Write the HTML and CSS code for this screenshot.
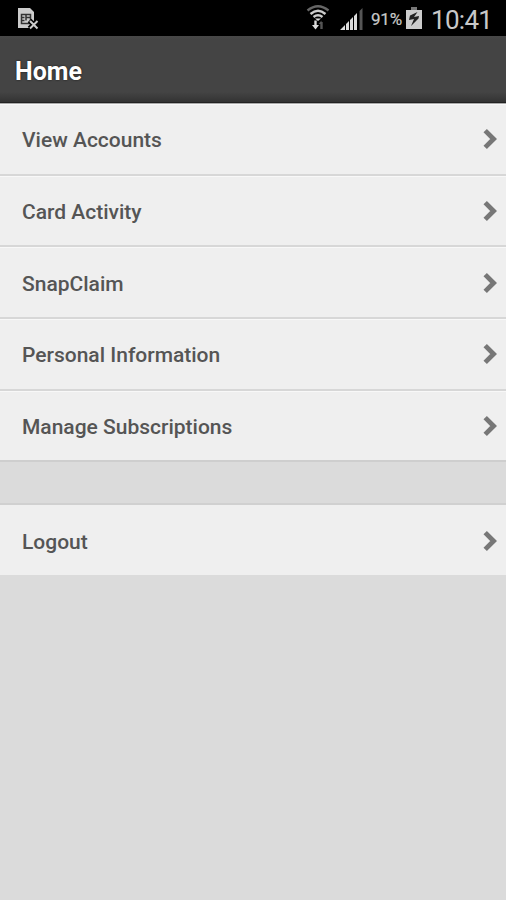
FILE: index.html
```
<!DOCTYPE html>
<html lang="en">
<head>
<meta charset="utf-8">
<title>Home</title>
<link rel="stylesheet" href="styles.css">
</head>
<body>
<svg class="defs" width="0" height="0"><symbol id="chevron" viewBox="0 0 16 22"><path d="M3.200 2.600 11.600 11 3.200 19.400" fill="none" stroke="currentColor" stroke-width="4.800"/></symbol></svg>
<div class="status">
  <svg class="sim" width="22" height="23" viewBox="0 0 22 23">
    <path d="M1 1h12l4 4v16H1z" fill="#ccc"/>
    <path d="M4.500 7.500h9v9h-9zM4.500 10.500h3M4.500 13.500h3M9 7.500v6M9 10.500h4.500" fill="none" stroke="#333" stroke-width="1.500"/>
    <path d="m12.500 13.500 8 8m0-8-8 8" stroke="#000" stroke-width="5"/>
    <path d="m13 14 7.500 7.500m0-7.500L13 21.500" stroke="#ccc" stroke-width="2"/>
  </svg>
  <svg class="wifi" width="24" height="27" viewBox="0 0 24 27" fill="none">
    <path d="M1.500 6.500Q12-2 22.500 6.500" stroke="#666" stroke-width="2.400"/>
    <path d="M4.500 10Q12 3.500 19.500 10M7.500 13Q12 9.500 16.500 13" stroke="#ccc" stroke-width="2.400"/>
    <path d="M9 14.500h6L12 17z" fill="#ddd"/>
    <path d="M9.500 16.500V23" stroke="#ddd" stroke-width="2.400"/><path d="M6 21h7l-3.500 4.500z" fill="#ddd"/>
    <path d="M15.500 25v-7" stroke="#555" stroke-width="2.400"/><path d="m12.500 20 3-3.500v3.500z" fill="#555"/>
  </svg>
  <svg class="signal" width="24" height="24" viewBox="0 0 24 24">
    <path d="M0 23l5-5v5zM6 23v-6l3-3v9zM10 23V13l3-3v13zM14 23V9l3-3v17z" fill="#ddd"/>
    <path d="M19.500 23V4L22.500 1v22z" fill="#555"/>
  </svg>
  <span class="percent">91%</span>
  <svg class="battery" width="16" height="24" viewBox="0 0 16 24">
    <path d="M5 1h6v3H5z" fill="#777"/><path d="M0 4h16v19H0z" fill="#ccc"/>
    <path d="M11.500 6 4 9.500 3 14l5-1-3 7 7.500-7.500.5-2.500-5 1z" fill="#222"/>
  </svg>
  <span class="clock">10:41</span>
</div>
<header class="header"><h1>Home</h1></header>
<nav>
  <ul class="menu main">
    <li><span>View Accounts</span><svg class="arrow"><use href="#chevron"/></svg></li>
    <li><span>Card Activity</span><svg class="arrow"><use href="#chevron"/></svg></li>
    <li><span>SnapClaim</span><svg class="arrow"><use href="#chevron"/></svg></li>
    <li><span>Personal Information</span><svg class="arrow"><use href="#chevron"/></svg></li>
    <li><span>Manage Subscriptions</span><svg class="arrow"><use href="#chevron"/></svg></li>
  </ul>
  <ul class="menu session">
    <li><span>Logout</span><svg class="arrow"><use href="#chevron"/></svg></li>
  </ul>
</nav>
</body>
</html>
```
FILE: styles.css
```
* { box-sizing: border-box; }
body { margin: 0; height: 900px; overflow: hidden; background: #dbdbdb; font-family: Roboto, "Liberation Sans", sans-serif; }
.defs { display: block; }
.status { height: 36px; background: #000; display: flex; align-items: flex-start; color: #c8c8c8; white-space: nowrap; }
.status svg { flex: none; }
.sim { margin: 7px 0 0 17px; }
.wifi { margin: 4px 0 0 267px; }
.signal { margin: 7px 0 0 10px; }
.percent { width: 32px; margin: 8px 0 0 7px; font-size: 17px; line-height: 22px; letter-spacing: -0.2px; -webkit-text-stroke: 0.2px #c8c8c8; }
.battery { margin: 6px 0 0 3px; }
.clock { margin: 5px 0 0 9px; font-size: 26px; line-height: 30px; letter-spacing: -0.7px; }
.header { height: 67px; padding: 5px 15px 0; display: flex; align-items: center; background: linear-gradient(#484848, #444 4px, #444 56px, #333); border-bottom: 1px solid #222; color: #fff; }
h1 { margin: 0; font-size: 25px; line-height: 30px; font-weight: 700; text-shadow: 0 0 2px #111; }
.menu { list-style: none; margin: 0; padding: 0; }
.menu li { display: flex; justify-content: space-between; align-items: center; padding: 2px 8px 0 22px; background: #efefef; color: #555; font-size: 21px; font-weight: 500; }
.main { padding-top: 1px; background: #aaa; }
.main li { height: 71.650px; border-top: 1px solid #f8f8f8; border-bottom: 2px solid #d7d7d7; }
.main li:last-child { border-bottom-color: #cecece; }
.session { margin-top: 41px; border-top: 2px solid #d0d0d0; }
.session li { height: 70px; padding-top: 3px; }
.arrow { flex: none; width: 16px; height: 22px; margin-bottom: 2px; color: #777; }
```
